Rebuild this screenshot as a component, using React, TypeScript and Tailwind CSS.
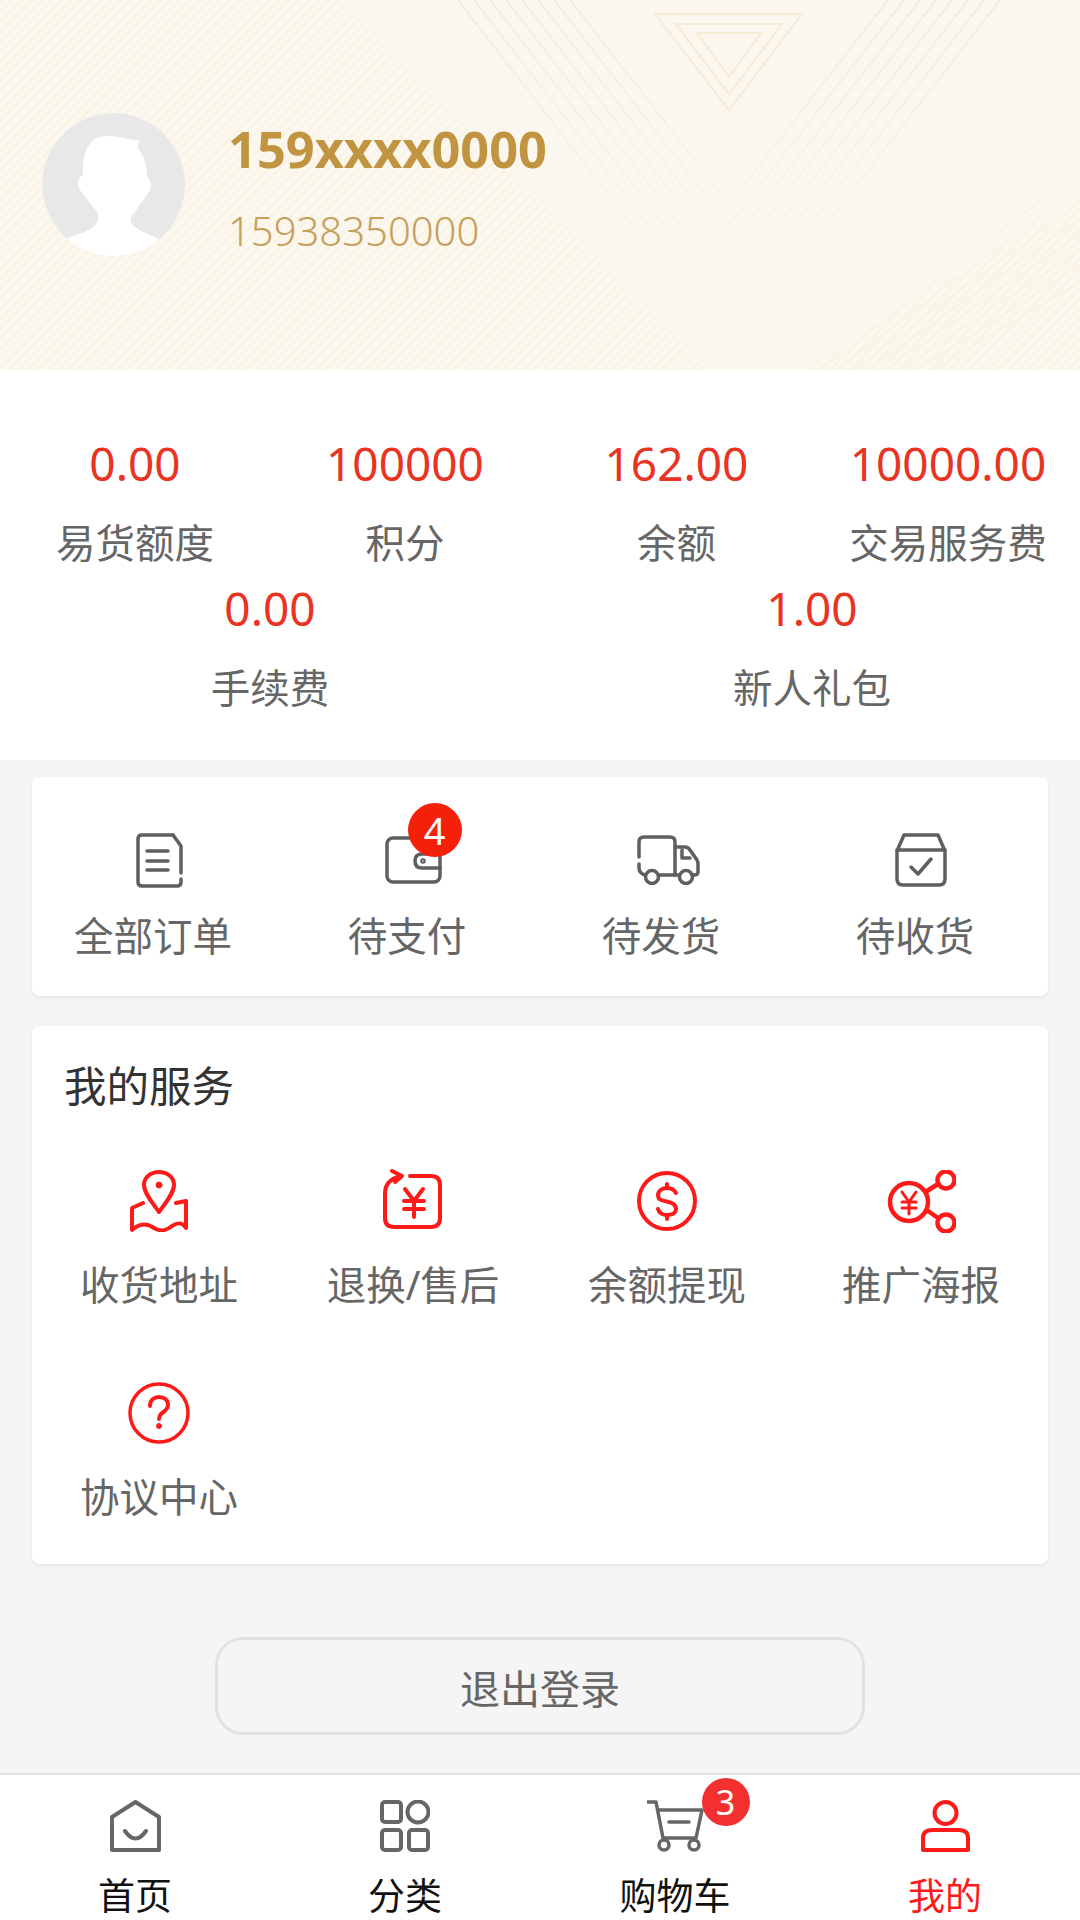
import React from "react";

const FONT = "font-['Noto_Sans','Noto_Sans_CJK_SC',sans-serif]";

const stats = [
    { value: "0.00", label: "易货额度", nudge: "" },
    { value: "100000", label: "积分", nudge: "" },
    { value: "162.00", label: "余额", nudge: "pl-[3px]" },
    { value: "10000.00", label: "交易服务费", nudge: "pl-[6px]" },
    { value: "0.00", label: "手续费", nudge: "" },
    { value: "1.00", label: "新人礼包", nudge: "pl-[4px]" },
];

const HeaderPattern = () => {
    const offsets = [0, 16, 32, 48, 64, 80, 96, 112];
    return (
        <svg className="absolute inset-0" width="1080" height="370" viewBox="0 0 1080 370" fill="none">
            <defs>
                <linearGradient id="fade" x1="0" y1="0" x2="0" y2="370" gradientUnits="userSpaceOnUse">
                    <stop offset="0" stopColor="#f6ead2" />
                    <stop offset="1" stopColor="#fbf7ef" />
                </linearGradient>
                <pattern id="hatch" width="7" height="7" patternUnits="userSpaceOnUse" patternTransform="rotate(45)">
                    <rect width="7" height="7" fill="#fcf8f0" />
                    <rect width="3" height="7" fill="#faf4e7" />
                </pattern>
            </defs>
            <path d="M0 0H340L710 370H0Z" fill="url(#hatch)" />
            <path d="M1080 200V370H800Z" fill="url(#hatch)" />
            {offsets.map((o) => (
                <path key={o} d={`M${458 + o} 0L${729} ${350 - o * 1.3}L${1000 - o} 0`} stroke="url(#fade)" strokeWidth="1.5" />
            ))}
            {offsets.map((o) => (
                <path key={o} d={`M1080 ${170 + o}L${820 + o} 370`} stroke="#f9f2e3" strokeWidth="1.5" />
            ))}
            <path d="M655 14H802L729 110Z" stroke="#f6ebd5" strokeWidth="2" />
            <path d="M676 24H782L729 94Z" stroke="#f6ebd5" strokeWidth="2" />
            <path d="M697 33H761L729 77Z" stroke="#f6ebd5" strokeWidth="2" />
        </svg>
    );
};

const Avatar = () => (
    <svg width="143" height="143" viewBox="0 0 143 143" className="shrink-0">
        <defs>
            <clipPath id="avatarClip">
                <circle cx="71.5" cy="71.5" r="71.5" />
            </clipPath>
        </defs>
        <g clipPath="url(#avatarClip)">
            <circle cx="71.5" cy="71.5" r="71.5" fill="#e8e8e8" />
            <path
                d="M41 62C40 42 46 24 63 23C75 22 88 28 98 27L95 35C102 42 105 52 105 64C109 66 110 72 108 77L93 99C87 104 87 109 93 114C100 119 108 122 115 125L130 143H12L26 125C34 122 44 119 50 115C56 110 58 105 55 99L38 77C35 72 35 66 41 62Z"
                fill="#ffffff"
            />
        </g>
    </svg>
);

const OrderIcon = () => (
    <svg width="47" height="55" viewBox="0 0 47 55" fill="none" stroke="#5f5f5f" strokeWidth="3.5" strokeLinecap="round" strokeLinejoin="round">
        <path d="M37 2H6Q2 2 2 6V49Q2 53 6 53H41Q45 53 45 49V46" />
        <path d="M45 40V13L37 2" />
        <path d="M11 18H32M11 28H32M11 37H32" />
    </svg>
);

const WalletIcon = () => (
    <svg width="57" height="48" viewBox="0 0 57 48" fill="none" stroke="#5f5f5f" strokeWidth="3.5" strokeLinecap="round" strokeLinejoin="round">
        <rect x="2" y="2" width="53" height="44" rx="6" />
        <path d="M55 32H37Q30 32 30 25Q30 18 37 18H55" />
        <circle cx="38" cy="25" r="1" />
    </svg>
);

const TruckIcon = () => (
    <svg width="63" height="50" viewBox="0 0 63 50" fill="none" stroke="#5f5f5f" strokeWidth="3.5" strokeLinecap="round" strokeLinejoin="round">
        <path d="M2 22V7Q2 2 7 2H33Q38 2 38 7V40" />
        <path d="M2 29V33Q2 38 8 40" />
        <path d="M22 40H42" />
        <path d="M38 12H48Q51 12 53 15L60 25Q61 27 61 29V37Q61 40 57 40H55" />
        <path d="M45 15V23H53" />
        <circle cx="15" cy="42" r="6.5" />
        <circle cx="49" cy="42" r="6.5" />
    </svg>
);

const BoxIcon = () => (
    <svg width="54" height="54" viewBox="0 0 54 54" fill="none" stroke="#5f5f5f" strokeWidth="3.5" strokeLinecap="round" strokeLinejoin="round">
        <path d="M10 2H44L51 18V46Q51 52 45 52H9Q3 52 3 46V18Z" />
        <path d="M3 17H51" />
        <path d="M17 34L24 41L37 26" />
    </svg>
);

const PinIcon = () => (
    <svg width="58" height="62" viewBox="0 0 58 62" fill="none" stroke="#ff1a1a" strokeWidth="4" strokeLinecap="round" strokeLinejoin="round">
        <path d="M29 42C22 32 14 23 14 15C14 7 21 2 29 2C37 2 44 7 44 15C44 23 36 32 29 42Z" />
        <circle cx="29" cy="15" r="3" fill="#ff1a1a" strokeWidth="1" />
        <path d="M13 33L2 38V60C10 53 17 53 24 58C31 62 36 61 42 56C48 52 52 52 56 58V31L46 33" />
    </svg>
);

const RefundIcon = () => (
    <svg width="60" height="60" viewBox="0 0 60 60" fill="none" stroke="#ff1a1a" strokeWidth="4" strokeLinecap="round" strokeLinejoin="round" className="overflow-visible">
        <path d="M27 5H48Q57 5 57 14V47Q57 56 48 56H11Q2 56 2 47V22Q2 9 18 5" />
        <path d="M9 0L19 5L12 11" />
        <path d="M22 18L31 30L40 18M31 30V46M21 30H41M21 38H41" />
    </svg>
);

const DollarIcon = () => (
    <svg width="60" height="62" viewBox="0 0 60 62" fill="none" stroke="#ff1a1a" strokeWidth="4" strokeLinecap="round" strokeLinejoin="round">
        <circle cx="30" cy="31" r="28" />
        <path d="M39 23C37 19 33 18 30 18C25 18 21 21 21 25C21 30 25 30.500 30 31.500C35 32.500 39 34 39 39C39 43 35 45 30 45C26 45 22 43 21 39" />
        <path d="M30 14V18M30 45V49" />
    </svg>
);

const PosterIcon = () => (
    <svg width="69" height="63" viewBox="0 0 69 63" fill="none" stroke="#ff1a1a" strokeWidth="4.500" strokeLinecap="round" strokeLinejoin="round">
        <circle cx="22" cy="32" r="19" />
        <circle cx="59" cy="10" r="8.5" />
        <circle cx="59" cy="53" r="8.5" />
        <path d="M40 21L51 14M41 41L51 48" />
        <path d="M15 22L22 32L29 22M22 32V44M15 32H29M15 38H29" strokeWidth="3" />
    </svg>
);

const HelpIcon = () => (
    <svg width="62" height="62" viewBox="0 0 62 62" fill="none" stroke="#ff1a1a" strokeWidth="3.5" strokeLinecap="round" strokeLinejoin="round">
        <circle cx="31" cy="31" r="29" />
        <path d="M22 24C22 18 26 15 31 15C36 15 40 18 40 23C40 28 36 29 33 32C31.500 33.500 31 35 31 37" strokeWidth="4" />
        <circle cx="31" cy="44" r="2.500" fill="#ff1a1a" strokeWidth="1" />
    </svg>
);

const HomeIcon = () => (
    <svg width="51" height="52" viewBox="0 0 51 52" fill="none" stroke="#666666" strokeWidth="4" strokeLinecap="round" strokeLinejoin="round">
        <path d="M25.500 2L49 17V50H2V17Z" />
        <path d="M15 31Q25.500 46 36 31" />
    </svg>
);

const GridIcon = () => (
    <svg width="50" height="52" viewBox="0 0 50 52" fill="none" stroke="#666666" strokeWidth="4" strokeLinejoin="round">
        <rect x="2" y="2" width="19" height="20" rx="3" />
        <circle cx="38" cy="12" r="10.500" />
        <rect x="2" y="30" width="19" height="20" rx="3" />
        <rect x="29" y="30" width="19" height="20" rx="3" />
    </svg>
);

const CartIcon = () => (
    <svg width="57" height="52" viewBox="0 0 57 52" fill="none" stroke="#666666" strokeWidth="3.5" strokeLinecap="round" strokeLinejoin="round">
        <path d="M1 2H9L16 38H49L55 10H11" />
        <path d="M22 22H42" />
        <circle cx="17" cy="45" r="5" />
        <circle cx="47" cy="45" r="5" />
    </svg>
);

const PersonIcon = () => (
    <svg width="49" height="52" viewBox="0 0 49 52" fill="none" stroke="#ff1a1a" strokeWidth="4" strokeLinejoin="round">
        <circle cx="24.500" cy="13" r="11" />
        <path d="M2 50V38Q2 30 11 30H38Q47 30 47 38V50Z" />
    </svg>
);

const services = [
    { label: "收货地址", icon: <PinIcon /> },
    { label: "退换/售后", icon: <RefundIcon /> },
    { label: "余额提现", icon: <DollarIcon /> },
    { label: "推广海报", icon: <PosterIcon /> },
    { label: "协议中心", icon: <HelpIcon /> },
];

export default function App() {
    return (
        <div className={`flex h-[1920px] w-[1080px] flex-col overflow-hidden bg-[#f5f5f5] ${FONT}`}>
            <div className="relative h-[370px] shrink-0 bg-[#fbf7ef]">
                <HeaderPattern />
                <div className="relative flex items-start gap-[43px] pl-[42px] pt-[113px]">
                    <Avatar />
                    <div className="mt-[6px]">
                        <p className="text-[50.500px] font-bold leading-[60px] text-[#c09440]">159xxxx0000</p>
                        <p className="mt-[27px] text-[40px] font-light leading-[50px] text-[#c5a05a]">15938350000</p>
                    </div>
                </div>
            </div>

            <div className="flex h-[390px] shrink-0 flex-wrap content-start justify-around bg-white pt-[63px]">
                {stats.map((s) => (
                    <div key={s.label + s.value} className={`mb-[10px] flex w-[270px] flex-col items-center ${s.nudge}`}>
                        <p className="text-[46px] leading-[60px] text-[#e93323]">{s.value}</p>
                        <p className="mt-[25px] text-[39.500px] leading-[50px] text-[#666666]">{s.label}</p>
                    </div>
                ))}
            </div>

            <div className="mx-[32px] mt-[17px] grid h-[219px] shrink-0 grid-cols-4 rounded-lg bg-white pt-[52px] shadow-[0_2px_4px_rgba(0,0,0,0.05)]">
                <div className="flex flex-col items-center">
                    <div className="flex h-[62px] items-center"><OrderIcon /></div>
                    <p className="mr-[12px] mt-[20px] text-[39.500px] leading-[50px] text-[#666666]">全部订单</p>
                </div>
                <div className="flex flex-col items-center">
                    <div className="relative flex h-[62px] items-center">
                        <WalletIcon />
                        <span className="absolute left-[23px] top-[-26px] flex h-[54px] w-[54px] items-center justify-center rounded-full bg-[#f5200a] text-[38px] leading-none text-white">4</span>
                    </div>
                    <p className="mr-[12px] mt-[20px] text-[39.500px] leading-[50px] text-[#666666]">待支付</p>
                </div>
                <div className="flex flex-col items-center">
                    <div className="ml-[3px] flex h-[62px] items-center"><TruckIcon /></div>
                    <p className="mr-[12px] mt-[20px] text-[39.500px] leading-[50px] text-[#666666]">待发货</p>
                </div>
                <div className="flex flex-col items-center">
                    <div className="flex h-[62px] items-center"><BoxIcon /></div>
                    <p className="mr-[12px] mt-[20px] text-[39.500px] leading-[50px] text-[#666666]">待收货</p>
                </div>
            </div>

            <div className="mx-[32px] mt-[30px] h-[538px] shrink-0 rounded-lg bg-white pt-[30px] shadow-[0_2px_4px_rgba(0,0,0,0.05)]">
                <p className="pl-[32px] text-[42.500px] leading-[60px] text-[#333333]">我的服务</p>
                <div className="mt-[54px] grid grid-cols-4 gap-y-[72px]">
                    {services.map((s) => (
                        <div key={s.label} className="flex flex-col items-center">
                            <div className="flex h-[62px] items-center">{s.icon}</div>
                            <p className="mt-[28px] text-[39.500px] leading-[50px] text-[#666666]">{s.label}</p>
                        </div>
                    ))}
                </div>
            </div>

            <div className="mx-auto mt-[73px] flex h-[98px] w-[650px] shrink-0 items-center justify-center rounded-[28px] border-[3px] border-[#e2e2e2] pt-[6px] text-[40px] text-[#666666]">
                退出登录
            </div>

            <div className="mt-auto grid h-[147px] shrink-0 grid-cols-4 border-t-2 border-[#e0e0e0] bg-white pt-[25px]">
                <div className="flex flex-col items-center">
                    <HomeIcon />
                    <p className="mt-[24px] text-[37px] leading-[40px] text-[#111111]">首页</p>
                </div>
                <div className="flex flex-col items-center">
                    <GridIcon />
                    <p className="mt-[24px] text-[37px] leading-[40px] text-[#111111]">分类</p>
                </div>
                <div className="flex flex-col items-center">
                    <div className="relative">
                        <CartIcon />
                        <span className="absolute left-[55px] top-[-22px] flex h-[48px] w-[48px] items-center justify-center rounded-full bg-[#f23030] text-[34px] leading-none text-white">3</span>
                    </div>
                    <p className="mt-[24px] text-[37px] leading-[40px] text-[#111111]">购物车</p>
                </div>
                <div className="flex flex-col items-center">
                    <PersonIcon />
                    <p className="mt-[24px] text-[37px] leading-[40px] text-[#ff1a1a]">我的</p>
                </div>
            </div>
        </div>
    );
}
